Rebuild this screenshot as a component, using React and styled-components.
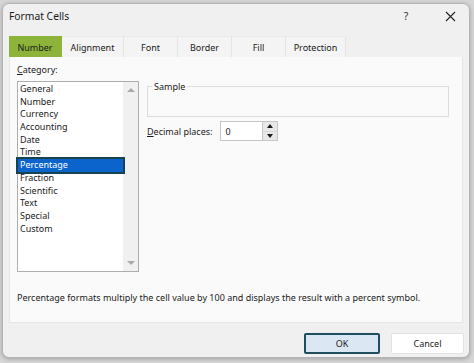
import React from "react";
import styled, { createGlobalStyle } from "styled-components";

const GlobalStyle = createGlobalStyle`
  html, body {
    margin: 0;
    padding: 0;
    background: #d6d6d6;
    font-family: "Noto Sans", "Open Sans", sans-serif;
  }
  * { box-sizing: border-box; }
`;

const Screen = styled.div`
  width: 474px;
  height: 363px;
  padding: 3px 4px 5px 2px;
`;

const Dialog = styled.div`
  width: 468px;
  height: 355px;
  background: #f0f0f0;
  border: 1px solid #b4b4b4;
  border-radius: 7px;
  box-shadow: 0 1px 4px rgba(0, 0, 0, 0.25);
  display: flex;
  flex-direction: column;
  overflow: hidden;
  color: #1a1a1a;
`;

const TitleBar = styled.div`
  height: 24px;
  display: flex;
  align-items: center;
  padding-left: 6px;
`;

const Title = styled.div`
  flex: 1;
  font-size: 10.3px;
`;

const TitleButton = styled.div`
  width: ${(p) => p.$w}px;
  height: 24px;
  display: flex;
  align-items: center;
  justify-content: center;
  font-size: 10.5px;
  color: #333;
`;

const TabRow = styled.div`
  display: flex;
  margin: 8px 6px 0 6px;
  height: 21px;
`;

const Tab = styled.div`
  width: ${(p) => p.$w}px;
  display: flex;
  align-items: center;
  justify-content: center;
  font-size: 9px;
  background: ${(p) => (p.$active ? "#8db33a" : "#f4f4f4")};
  border-right: 1px solid ${(p) => (p.$active ? "#8db33a" : "#e4e4e4")};
  border-top: 1px solid ${(p) => (p.$active ? "#8db33a" : "#e8e8e8")};
`;

const Panel = styled.div`
  margin: 0 6px;
  height: 266px;
  background: #fafafa;
  border: 1px solid #e6e6e6;
  border-top: none;
  padding: 6px 7px 0 7px;
  display: flex;
  flex-direction: column;
`;

const Columns = styled.div`
  display: flex;
  gap: 8px;
`;

const LeftCol = styled.div`
  width: 122px;
  display: flex;
  flex-direction: column;
`;

const Label = styled.div`
  font-size: 9px;
  height: 14px;
  line-height: 14px;
  margin-bottom: 4px;
  u { text-decoration: underline; text-underline-offset: 1px; }
`;

const ListBox = styled.div`
  height: 191px;
  background: #ffffff;
  border: 1px solid #adadad;
  display: flex;
`;

const Items = styled.div`
  flex: 1;
  padding-top: 1px;
`;

const Item = styled.div`
  height: 12.7px;
  line-height: 12.7px;
  font-size: 9px;
  padding-left: 2px;
  ${(p) =>
    p.$selected &&
    `
    background: #0b63cc;
    color: #ffffff;
    outline: 2px solid #17424f;
    outline-offset: 0px;
    position: relative;
  `}
`;

const ScrollBar = styled.div`
  width: 15px;
  background: #f0f0f0;
  display: flex;
  flex-direction: column;
  justify-content: space-between;
  align-items: center;
  padding: 6px 0;
`;

const Arrow = styled.div`
  width: 0;
  height: 0;
  border-left: 4px solid transparent;
  border-right: 4px solid transparent;
  ${(p) =>
    p.$down
      ? "border-top: 4px solid #a9a9a9;"
      : "border-bottom: 4px solid #a9a9a9;"}
`;

const RightCol = styled.div`
  flex: 1;
  padding-top: 17px;
  padding-right: 6px;
  display: flex;
  flex-direction: column;
`;

const GroupBox = styled.fieldset`
  margin: 0;
  padding: 0;
  height: 37px;
  border: 1px solid #dcdcdc;
  legend {
    font-size: 9px;
    padding: 0 2px;
    margin-left: 4px;
  }
`;

const FieldRow = styled.div`
  display: flex;
  align-items: center;
  margin-top: 4px;
  gap: 8px;
  font-size: 9px;
  u { text-decoration: underline; text-underline-offset: 1px; }
`;

const Spinner = styled.div`
  display: flex;
  height: 20px;
`;

const SpinInput = styled.div`
  width: 43px;
  background: #fff;
  border: 1px solid #c6c6c6;
  font-size: 9px;
  padding-left: 4px;
  display: flex;
  align-items: center;
`;

const SpinButtons = styled.div`
  width: 15px;
  display: flex;
  flex-direction: column;
  gap: 1px;
  background: #d8d8d8;
  border: 1px solid #c6c6c6;
  border-left: none;
`;

const SpinButton = styled.div`
  flex: 1;
  background: #e8e8e8;
  display: flex;
  align-items: center;
  justify-content: center;
`;

const SmallArrow = styled.div`
  width: 0;
  height: 0;
  border-left: 3px solid transparent;
  border-right: 3px solid transparent;
  ${(p) =>
    p.$down ? "border-top: 4px solid #1a1a1a;" : "border-bottom: 4px solid #1a1a1a;"}
`;

const Description = styled.div`
  margin-top: 19px;
  font-size: 9px;
  line-height: 14px;
`;

const Footer = styled.div`
  flex: 1;
  display: flex;
  justify-content: flex-end;
  align-items: flex-start;
  padding: 10px 5px 0 0;
  gap: 11px;
`;

const Button = styled.div`
  width: ${(p) => (p.$primary ? 76 : 73)}px;
  height: 21px;
  display: flex;
  align-items: center;
  justify-content: center;
  font-size: 9px;
  border-radius: 2px;
  background: ${(p) => (p.$primary ? "#dbe8f4" : "#ffffff")};
  border: ${(p) => (p.$primary ? "2px solid #1f4f5c" : "1px solid #e2e2e2")};
`;

const categories = [
  "General",
  "Number",
  "Currency",
  "Accounting",
  "Date",
  "Time",
  "Percentage",
  "Fraction",
  "Scientific",
  "Text",
  "Special",
  "Custom",
];

const tabs = [
  ["Number", 53],
  ["Alignment", 62],
  ["Font", 54],
  ["Border", 54],
  ["Fill", 54],
  ["Protection", 60],
];

export default function App() {
  return (
    <Screen>
      <GlobalStyle />
      <Dialog>
        <TitleBar>
          <Title>Format Cells</Title>
          <TitleButton $w={50}>?</TitleButton>
          <TitleButton $w={38}>
            <svg width="11" height="11" viewBox="0 0 11 11">
              <path d="M1 1L10 10M10 1L1 10" stroke="#222" strokeWidth="1.1" />
            </svg>
          </TitleButton>
        </TitleBar>
        <TabRow>
          {tabs.map(([name, w], i) => (
            <Tab key={name} $w={w} $active={i === 0}>
              {name}
            </Tab>
          ))}
        </TabRow>
        <Panel>
          <Columns>
            <LeftCol>
              <Label>
                <u>C</u>ategory:
              </Label>
              <ListBox>
                <Items>
                  {categories.map((c) => (
                    <Item key={c} $selected={c === "Percentage"}>
                      {c}
                    </Item>
                  ))}
                </Items>
                <ScrollBar>
                  <Arrow />
                  <Arrow $down />
                </ScrollBar>
              </ListBox>
            </LeftCol>
            <RightCol>
              <GroupBox>
                <legend>Sample</legend>
              </GroupBox>
              <FieldRow>
                <span>
                  <u>D</u>ecimal places:
                </span>
                <Spinner>
                  <SpinInput>0</SpinInput>
                  <SpinButtons>
                    <SpinButton>
                      <SmallArrow />
                    </SpinButton>
                    <SpinButton>
                      <SmallArrow $down />
                    </SpinButton>
                  </SpinButtons>
                </Spinner>
              </FieldRow>
            </RightCol>
          </Columns>
          <Description>
            Percentage formats multiply the cell value by 100 and displays the
            result with a percent symbol.
          </Description>
        </Panel>
        <Footer>
          <Button $primary>OK</Button>
          <Button>Cancel</Button>
        </Footer>
      </Dialog>
    </Screen>
  );
}
